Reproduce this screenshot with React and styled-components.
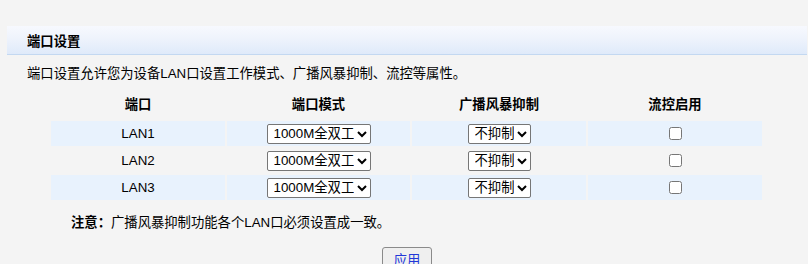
import React from 'react'
import styled, { createGlobalStyle } from 'styled-components'

const GlobalStyle = createGlobalStyle`
    html, body {
        margin: 0;
        padding: 0;
        background: #f4f4f4;
    }
    body {
        font-family: "Liberation Sans", "Noto Sans CJK SC", sans-serif;
        font-size: 13.33px;
        color: #000;
    }
`

const Page = styled.div`
    padding: 26px 1px 0 7px;
    height: 238px;
    overflow: hidden;
`

// blue bar with the section title
const TitleBar = styled.div`
    height: 28px;
    display: flex;
    align-items: center;
    padding-left: 20px;
    background: linear-gradient(to bottom, #f7f9fe 0%, #eef3fc 45%, #dfeafa 100%);
    border-bottom: 1px solid #c3d8f1;
    font-weight: bold;
`

const Desc = styled.p`
    margin: 0;
    padding: 11px 0 0 20px;
    line-height: 16px;
`

const Table = styled.div`
    display: grid;
    grid-template-columns: 174px 183px 174px 174px;
    column-gap: 2px;
    row-gap: 2px;
    margin: 10px 0 0 44px;
    width: max-content;
`

const HeadCell = styled.div`
    height: 27px;
    display: flex;
    justify-content: center;
    padding-top: 2px;
    box-sizing: border-box;
    font-weight: bold;
`

const Cell = styled.div`
    height: 25px;
    display: flex;
    align-items: center;
    justify-content: center;
    background: ${props => props.striped ? '#e8f2fd' : 'transparent'};
`

const Select = styled.select`
    font-family: "Liberation Sans", "Noto Sans CJK SC", sans-serif;
    font-size: 13.33px;
    height: 20px;
    width: ${props => props.w}px;
    padding: 0 0 0 2px;
    border: 1px solid #767676;
    border-radius: 2px;
    background: #fff;
    color: #000;
`

const Check = styled.input`
    width: 13px;
    height: 13px;
    margin: 0;
`

const Note = styled.div`
    padding: 15px 0 0 64px;
    line-height: 16px;
    b {
        font-weight: bold;
    }
`

const BtnRow = styled.div`
    display: flex;
    justify-content: center;
    padding-top: 16px;
`

const Btn = styled.button`
    width: 50px;
    height: 24px;
    font-family: "Liberation Sans", "Noto Sans CJK SC", sans-serif;
    font-size: 13.33px;
    color: #2237d8;
    background: #efefef;
    border: 1px solid #8a8a8a;
    border-radius: 3px;
    padding: 0;
`

const ports = ['LAN1', 'LAN2', 'LAN3']

export default function App() {
    return (
        <Page>
            <GlobalStyle />
            <TitleBar>端口设置</TitleBar>
            <Desc>端口设置允许您为设备LAN口设置工作模式、广播风暴抑制、流控等属性。</Desc>
            <Table>
                <HeadCell>端口</HeadCell>
                <HeadCell>端口模式</HeadCell>
                <HeadCell>广播风暴抑制</HeadCell>
                <HeadCell>流控启用</HeadCell>
                {ports.map((p, i) => {
                    const striped = i % 2 === 0
                    return (
                        <React.Fragment key={p}>
                            <Cell striped={striped}>{p}</Cell>
                            <Cell striped={striped}>
                                <Select w={104} defaultValue="1000">
                                    <option value="1000">1000M全双工</option>
                                    <option value="100">100M全双工</option>
                                    <option value="auto">自动协商</option>
                                </Select>
                            </Cell>
                            <Cell striped={striped}>
                                <Select w={63} defaultValue="no">
                                    <option value="no">不抑制</option>
                                    <option value="yes">抑制</option>
                                </Select>
                            </Cell>
                            <Cell striped={striped}>
                                <Check type="checkbox" />
                            </Cell>
                        </React.Fragment>
                    )
                })}
            </Table>
            <Note><b>注意：</b>广播风暴抑制功能各个LAN口必须设置成一致。</Note>
            <BtnRow>
                <Btn>应用</Btn>
            </BtnRow>
        </Page>
    )
}
